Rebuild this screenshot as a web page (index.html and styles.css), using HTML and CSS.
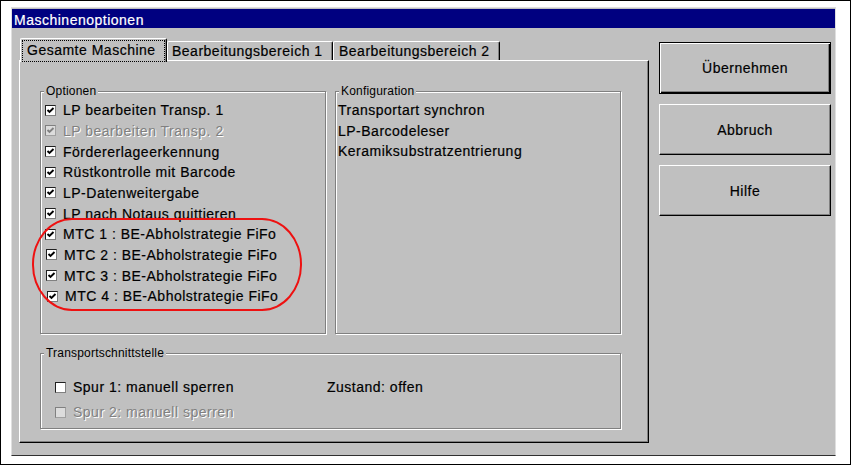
FILE: index.html
```html
<!DOCTYPE html>
<html lang="de">
<head>
<meta charset="utf-8">
<title>Maschinenoptionen</title>
<link rel="stylesheet" href="styles.css">
</head>
<body>
<div class="screen">
  <div class="window">
    <div class="titlebar">Maschinenoptionen</div>
    <div class="client">
      <div class="tabarea">
        <div class="tabs">
          <div class="tab tab-active"><span class="focus">Gesamte Maschine</span></div>
          <div class="tab tab-2">Bearbeitungsbereich 1</div>
          <div class="tab tab-3">Bearbeitungsbereich 2</div>
        </div>
        <div class="panel">
          <div class="groups-row">
            <div class="group group-options">
              <div class="legend">Optionen</div>
              <div class="check-list">
                <div class="row"><span class="cb"><svg viewBox="0 0 9 9" class="tick"><polyline points="1.5,4 3.5,6 7.5,2"/></svg></span><span class="label">LP bearbeiten Transp. 1</span></div>
                <div class="row disabled"><span class="cb"><svg viewBox="0 0 9 9" class="tick"><polyline points="1.5,4 3.5,6 7.5,2"/></svg></span><span class="label">LP bearbeiten Transp. 2</span></div>
                <div class="row"><span class="cb"><svg viewBox="0 0 9 9" class="tick"><polyline points="1.5,4 3.5,6 7.5,2"/></svg></span><span class="label">Fördererlageerkennung</span></div>
                <div class="row"><span class="cb"><svg viewBox="0 0 9 9" class="tick"><polyline points="1.5,4 3.5,6 7.5,2"/></svg></span><span class="label">Rüstkontrolle mit Barcode</span></div>
                <div class="row"><span class="cb"><svg viewBox="0 0 9 9" class="tick"><polyline points="1.5,4 3.5,6 7.5,2"/></svg></span><span class="label">LP-Datenweitergabe</span></div>
                <div class="row"><span class="cb"><svg viewBox="0 0 9 9" class="tick"><polyline points="1.5,4 3.5,6 7.5,2"/></svg></span><span class="label">LP nach Notaus quittieren</span></div>
                <div class="row"><span class="cb"><svg viewBox="0 0 9 9" class="tick"><polyline points="1.5,4 3.5,6 7.5,2"/></svg></span><span class="label">MTC 1 : BE-Abholstrategie FiFo</span></div>
                <div class="row shift-1"><span class="cb"><svg viewBox="0 0 9 9" class="tick"><polyline points="1.5,4 3.5,6 7.5,2"/></svg></span><span class="label">MTC 2 : BE-Abholstrategie FiFo</span></div>
                <div class="row shift-1"><span class="cb"><svg viewBox="0 0 9 9" class="tick"><polyline points="1.5,4 3.5,6 7.5,2"/></svg></span><span class="label">MTC 3 : BE-Abholstrategie FiFo</span></div>
                <div class="row shift-2"><span class="cb"><svg viewBox="0 0 9 9" class="tick"><polyline points="1.5,4 3.5,6 7.5,2"/></svg></span><span class="label">MTC 4 : BE-Abholstrategie FiFo</span></div>
              </div>
              <div class="annotation"></div>
            </div>
            <div class="group group-config">
              <div class="legend">Konfiguration</div>
              <div class="config-list">
                <div class="cfg">Transportart synchron</div>
                <div class="cfg">LP-Barcodeleser</div>
                <div class="cfg">Keramiksubstratzentrierung</div>
              </div>
            </div>
          </div>
          <div class="group group-transport">
            <div class="legend">Transportschnittstelle</div>
            <div class="transport-grid">
              <div class="row"><span class="cb"></span><span class="label">Spur 1: manuell sperren</span></div>
              <div class="row status">Zustand: offen</div>
              <div class="row disabled"><span class="cb"></span><span class="label">Spur 2: manuell sperren</span></div>
            </div>
          </div>
        </div>
      </div>
      <div class="buttons">
        <div class="btn btn-default">Übernehmen</div>
        <div class="btn">Abbruch</div>
        <div class="btn">Hilfe</div>
      </div>
    </div>
  </div>
</div>
</body>
</html>
```
FILE: styles.css
```css
* {
  box-sizing: border-box;
}

body {
  margin: 0;
  background: #fff;
  font-family: "Liberation Sans", Arial, sans-serif;
  font-size: 14px;
  letter-spacing: 0.5px;
  color: #000;
  -webkit-text-stroke-width: 0.2px;
}

.screen {
  width: 851px;
  height: 465px;
  border: 1px solid #000;
  padding: 6px 0 0 10px;
  background: #fff;
}

.window {
  width: 825px;
  height: 449px;
  background: #c0c0c0;
  border: 1px solid #dfdfdf;
  border-bottom-color: #303030;
  padding-top: 1px;
}

.titlebar {
  height: 19px;
  background: #000080;
  color: #fff;
  padding: 3px 0 0 2px;
  line-height: 16px;
}

.client {
  display: flex;
  padding: 10px 0 0 7px;
}

.tabarea {
  width: 630px;
  flex: none;
}

.tabs {
  display: flex;
  align-items: flex-end;
  height: 22px;
  padding-left: 1px;
}

.tab {
  height: 19px;
  background: #c0c0c0;
  border: 1px solid #fff;
  border-bottom: none;
  border-right-color: #000;
  box-shadow: inset -1px 0 0 #808080;
  border-radius: 2px 2px 0 0;
  padding-left: 4px;
  line-height: 18px;
  white-space: nowrap;
}

.tab-active {
  width: 147px;
  height: 24px;
  margin-bottom: -2px;
  padding: 1px 1px 0 1px;
  line-height: 17px;
  position: relative;
  z-index: 1;
}

.focus {
  display: block;
  border: 1px dotted #000;
  padding: 1px 4px 2px 4px;
}

.tab-2 {
  width: 166px;
}

.tab-3 {
  width: 167px;
  padding-left: 5px;
}

.panel {
  height: 383px;
  border: 1px solid;
  border-color: #fff #000 #000 #fff;
  box-shadow: inset -1px -1px 0 #808080;
  padding: 30px 0 0 20px;
}

.groups-row {
  display: flex;
  gap: 9px;
}

.group {
  border: 1px solid #808080;
  box-shadow: 1px 1px 0 #fff, inset 1px 1px 0 #fff;
}

.group-options,
.group-config {
  width: 286px;
  height: 243px;
}

.group-options {
  position: relative;
}

.group-transport {
  width: 581px;
  height: 76px;
  margin-top: 19px;
}

.legend {
  display: block;
  width: max-content;
  margin: -8px 0 0 3px;
  padding: 0 2px 0 2px;
  background: #c0c0c0;
  font-size: 12px;
  line-height: 14px;
  letter-spacing: 0.2px;
  -webkit-text-stroke-width: 0;
}

.check-list {
  margin-top: 2px;
  padding-left: 4px;
}

.row {
  display: flex;
  align-items: center;
  height: 20.67px;
  white-space: nowrap;
}

.shift-1 {
  padding-left: 1px;
}

.shift-2 {
  padding-left: 2px;
}

.cb {
  width: 11px;
  height: 11px;
  flex: none;
  margin-right: 7px;
  background: #fff;
  border: 1px solid;
  border-color: #202020 #808080 #808080 #202020;
  display: flex;
}

.tick {
  width: 9px;
  height: 9px;
  fill: none;
  stroke: #000;
  stroke-width: 1.9;
}

.disabled .cb {
  background: #dcdcdc;
  border-color: #808080 #a0a0a0 #a0a0a0 #808080;
}

.disabled .tick {
  stroke: #808080;
}

.disabled .label {
  color: #808080;
  text-shadow: 1px 1px 0 #fff;
  -webkit-text-stroke-width: 0;
}

.annotation {
  position: absolute;
  left: -9px;
  top: 126px;
  width: 270px;
  height: 93px;
  border: 2px solid #ee1111;
  border-radius: 40px / 46px;
}

.config-list {
  margin-top: 2px;
  padding-left: 2px;
}

.cfg {
  height: 20.5px;
  line-height: 20.5px;
  white-space: nowrap;
}

.transport-grid {
  display: grid;
  grid-template-columns: 272px auto;
  grid-auto-rows: 20px;
  row-gap: 5px;
  margin-top: 17px;
  padding-left: 14px;
}

.buttons {
  display: flex;
  flex-direction: column;
  gap: 10px;
  margin-left: 10px;
  padding-top: 4px;
}

.btn {
  width: 172px;
  height: 51px;
  display: flex;
  align-items: center;
  justify-content: center;
  border: 1px solid;
  border-color: #fff #000 #000 #fff;
  box-shadow: inset -1px -1px 0 #808080;
}

.btn-default {
  height: 52px;
  border-color: #000;
  box-shadow: inset 1px 1px 0 #fff, inset -1px -1px 0 #000, inset -2px -2px 0 #808080;
}
```
